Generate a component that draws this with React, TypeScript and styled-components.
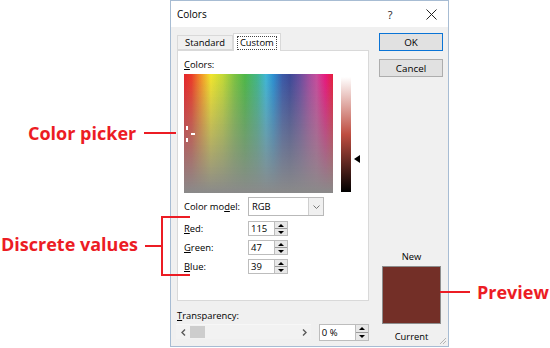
import React from "react";
import styled, { createGlobalStyle } from "styled-components";

const Global = createGlobalStyle`
  html, body { margin: 0; padding: 0; background: #ffffff; }
  body {
    width: 550px; height: 348px; overflow: hidden;
    font-family: "Open Sans", "Noto Sans", sans-serif;
    color: #000;
  }
  * { box-sizing: border-box; }
`;

const RED = "#ec1c24";

const Stage = styled.div`
  position: relative;
  width: 550px;
  height: 348px;
  display: flex;
  padding-left: 170px;
`;

const Dialog = styled.div`
  position: relative;
  width: 279px;
  height: 347px;
  border: 1px solid #a7bcd3;
  background: #f0f0f0;
  display: flex;
  flex-direction: column;
  font-size: 9.4px;
`;

const TitleBar = styled.div`
  height: 26px;
  background: #ffffff;
  display: flex;
  align-items: center;
  padding-left: 6px;
`;

const Title = styled.div`
  flex: 1;
  font-size: 10px;
`;

const TitleButton = styled.div<{ $w: number }>`
  width: ${(p) => p.$w}px;
  height: 26px;
  display: flex;
  align-items: center;
  justify-content: center;
  font-size: 11px;
  color: #222;
`;

const Body = styled.div`
  flex: 1;
  display: flex;
  gap: 10px;
  padding: 6px 4px 0 6px;
`;

const LeftCol = styled.div`
  width: 192px;
  display: flex;
  flex-direction: column;
`;

const TabStrip = styled.div`
  height: 17px;
  display: flex;
  align-items: flex-end;
`;

const Tab = styled.div<{ $active?: boolean }>`
  position: relative;
  z-index: ${(p) => (p.$active ? 1 : 0)};
  height: ${(p) => (p.$active ? 18 : 15)}px;
  margin-bottom: ${(p) => (p.$active ? -1 : 0)}px;
  padding: ${(p) => (p.$active ? "2px 3px 0" : "0 7px")};
  border: 1px solid #d9d9d9;
  border-bottom: ${(p) => (p.$active ? "none" : "1px solid #d9d9d9")};
  background: ${(p) => (p.$active ? "#ffffff" : "#f0f0f0")};
  display: flex;
  align-items: ${(p) => (p.$active ? "flex-start" : "center")};
  line-height: 12px;
`;

const FocusRect = styled.span`
  border: 1px dotted #444;
  padding: 0 2px;
  line-height: 12px;
`;

const Panel = styled.div`
  height: 251px;
  border: 1px solid #d9d9d9;
  background: #ffffff;
  padding: 0 6px;
  display: flex;
  flex-direction: column;
`;

const FieldLabel = styled.div<{ $mt?: number }>`
  margin-top: ${(p) => p.$mt ?? 0}px;
  line-height: 14px;
  height: 14px;
`;

const U = styled.span`
  text-decoration: underline;
  text-underline-offset: 1px;
`;

const PickerRow = styled.div`
  margin-top: 2px;
  display: flex;
  align-items: flex-start;
`;

const Spectrum = styled.div`
  position: relative;
  width: 150px;
  height: 119px;
  background:
    linear-gradient(to bottom, rgba(138,138,138,0) 0%, rgba(138,138,138,0.5) 50%, rgba(138,138,138,1) 100%),
    linear-gradient(to right,
      #e5242a 0%, #ec3a28 5%, #f07228 9%, #f39a26 12%, #f2e52c 18%, #c3d936 26%,
      #7cc242 34%, #4db748 41%, #41b58a 49%, #3fb6d6 55%, #2c8fd0 60%,
      #3a5aa8 66%, #3b4997 71%, #6a4d9e 78%, #a14d9e 84%, #c74c9c 89%,
      #e8177c 95%, #e61e3c 100%);
`;

const Cross = styled.div<{ $x: number; $y: number; $w: number; $h: number }>`
  position: absolute;
  left: ${(p) => p.$x}px;
  top: ${(p) => p.$y}px;
  width: ${(p) => p.$w}px;
  height: ${(p) => p.$h}px;
  background: #ffffff;
`;

const LumBar = styled.div`
  margin-top: 3px;
  margin-left: 8px;
  width: 10px;
  height: 115px;
  background: linear-gradient(to bottom,
    #ffffff 0%, hsl(6,49%,75%) 25%, hsl(6,49%,50%) 50%, hsl(6,49%,25%) 75%, #000000 100%);
`;

const ArrowCol = styled.div`
  margin-left: 3px;
  padding-top: 79px;
  width: 8px;
`;

const Row = styled.div<{ $mt: number }>`
  margin-top: ${(p) => p.$mt}px;
  display: flex;
  align-items: center;
`;

const RowLabel = styled.div`
  width: 64px;
  line-height: 13px;
`;

const Select = styled.div`
  width: 76px;
  height: 19px;
  border: 1px solid #b9b9b9;
  background: #ffffff;
  display: flex;
`;

const SelectValue = styled.div`
  flex: 1;
  padding-left: 3px;
  line-height: 17px;
`;

const SelectButton = styled.div`
  width: 15px;
  border-left: 1px solid #cfcfcf;
  background: #f0f0f0;
  display: flex;
  align-items: center;
  justify-content: center;
`;

const SpinBox = styled.div<{ $w: number; $h: number }>`
  width: ${(p) => p.$w}px;
  height: ${(p) => p.$h}px;
  display: flex;
`;

const SpinValue = styled.div`
  flex: 1;
  border: 1px solid #bdbdbd;
  border-right: none;
  background: #ffffff;
  padding-left: 2px;
  display: flex;
  align-items: center;
  font-size: 9.5px;
`;

const SpinButtons = styled.div`
  width: 14px;
  border: 1px solid #bdbdbd;
  background: #e8e8e8;
  display: flex;
  flex-direction: column;
`;

const SpinHalf = styled.div<{ $top?: boolean }>`
  flex: 1;
  display: flex;
  align-items: center;
  justify-content: center;
  border-bottom: ${(p) => (p.$top ? "1px solid #9a9a9a" : "none")};
`;

const Tri = styled.div<{ $up?: boolean }>`
  width: 0;
  height: 0;
  border-left: 3px solid transparent;
  border-right: 3px solid transparent;
  ${(p) => (p.$up ? "border-bottom: 3px solid #000;" : "border-top: 3px solid #000;")}
`;

const ScrollRow = styled.div`
  margin-top: 1px;
  margin-left: -1px;
  display: flex;
  align-items: flex-start;
  gap: 8px;
`;

const Scrollbar = styled.div`
  width: 137px;
  height: 15px;
  background: #f2f2f2;
  border-top: 1px solid #f7f7f7;
  display: flex;
  align-items: center;
  padding: 0 4px 0 5px;
`;

const Thumb = styled.div`
  width: 15px;
  height: 12px;
  background: #cdcdcd;
  margin-left: 4px;
`;

const Grow = styled.div`
  flex: 1;
`;

const RightCol = styled.div`
  width: 64px;
  display: flex;
  flex-direction: column;
  padding-bottom: 3px;
`;

const Button = styled.div<{ $primary?: boolean; $mt?: number }>`
  height: 18px;
  margin-top: ${(p) => p.$mt ?? 0}px;
  border: 1px solid ${(p) => (p.$primary ? "#0a74d6" : "#adadad")};
  background: #e1e1e1;
  display: flex;
  align-items: center;
  justify-content: center;
  font-size: 9.8px;
`;

const CenterLabel = styled.div`
  margin-top: auto;
  text-align: center;
  line-height: 13px;
  padding-left: 1px;
`;

const Swatch = styled.div<{ $color: string }>`
  margin: 3px 0 6px 3px;
  width: 59px;
  height: 58px;
  border: 1px solid #8d8d8d;
  background: ${(p) => p.$color};
`;

const BottomLabel = styled.div`
  text-align: center;
  line-height: 13px;
  padding-left: 1px;
`;

const Grip = styled.svg`
  position: absolute;
  right: 1px;
  bottom: 1px;
`;

/* Callouts */
const Callout = styled.div<{ $x: number; $y: number }>`
  position: absolute;
  left: ${(p) => p.$x}px;
  top: ${(p) => p.$y}px;
  display: flex;
  align-items: center;
  font-family: "Open Sans", "Noto Sans", sans-serif;
  font-weight: 700;
  font-size: 18px;
  line-height: 24px;
  color: ${RED};
  white-space: nowrap;
`;

const CalloutText = styled.span<{ $ml?: number; $shift?: number }>`
  margin-left: ${(p) => p.$ml ?? 0}px;
  position: relative;
  top: ${(p) => p.$shift ?? 0}px;
`;

const Line = styled.div<{ $w: number; $ml: number }>`
  width: ${(p) => p.$w}px;
  height: 2px;
  margin-left: ${(p) => p.$ml}px;
  background: ${RED};
`;

const Bracket = styled.div`
  width: 29px;
  height: 60px;
  border: 2px solid ${RED};
  border-right: none;
`;

const Chevron = ({ dir }: { dir: "l" | "r" }) => (
  <svg width="5" height="7" viewBox="0 0 5 7">
    <path
      d={dir === "l" ? "M4 0.5 L1 3.5 L4 6.5" : "M1 0.5 L4 3.5 L1 6.5"}
      fill="none"
      stroke="#5a5a5a"
      strokeWidth="1.4"
    />
  </svg>
);

const Spin = ({ value, w, h }: { value: string; w: number; h: number }) => (
  <SpinBox $w={w} $h={h}>
    <SpinValue>{value}</SpinValue>
    <SpinButtons>
      <SpinHalf $top>
        <Tri $up />
      </SpinHalf>
      <SpinHalf>
        <Tri />
      </SpinHalf>
    </SpinButtons>
  </SpinBox>
);

export default function App() {
  return (
    <>
      <Global />
      <Stage>
        <Dialog>
          <TitleBar>
            <Title>Colors</Title>
            <TitleButton $w={48}>?</TitleButton>
            <TitleButton $w={34}>
              <svg width="11" height="11" viewBox="0 0 11 11">
                <path d="M0.5 0.5 L10.5 10.5 M10.5 0.5 L0.5 10.5" stroke="#222" strokeWidth="1" />
              </svg>
            </TitleButton>
          </TitleBar>
          <Body>
            <LeftCol>
              <TabStrip>
                <Tab>Standard</Tab>
                <Tab $active>
                  <FocusRect>Custom</FocusRect>
                </Tab>
              </TabStrip>
              <Panel>
                <FieldLabel $mt={7}>
                  <U>C</U>olors:
                </FieldLabel>
                <PickerRow>
                  <Spectrum>
                    <Cross $x={2} $y={52} $w={2} $h={4} />
                    <Cross $x={2} $y={64} $w={2} $h={4} />
                    <Cross $x={7} $y={59} $w={4} $h={2} />
                  </Spectrum>
                  <LumBar />
                  <ArrowCol>
                    <svg width="6" height="8" viewBox="0 0 6 8">
                      <path d="M0 4 L6 0 L6 8 Z" fill="#000" />
                    </svg>
                  </ArrowCol>
                </PickerRow>
                <Row $mt={4}>
                  <RowLabel>
                    Color mo<U>d</U>el:
                  </RowLabel>
                  <Select>
                    <SelectValue>RGB</SelectValue>
                    <SelectButton>
                      <svg width="7" height="4" viewBox="0 0 7 4">
                        <path d="M0.5 0.5 L3.5 3.5 L6.5 0.5" fill="none" stroke="#777" strokeWidth="1" />
                      </svg>
                    </SelectButton>
                  </Select>
                </Row>
                <Row $mt={5}>
                  <RowLabel>
                    <U>R</U>ed:
                  </RowLabel>
                  <Spin value="115" w={40} h={15} />
                </Row>
                <Row $mt={4}>
                  <RowLabel>
                    <U>G</U>reen:
                  </RowLabel>
                  <Spin value="47" w={40} h={15} />
                </Row>
                <Row $mt={4}>
                  <RowLabel>
                    <U>B</U>lue:
                  </RowLabel>
                  <Spin value="39" w={40} h={15} />
                </Row>
              </Panel>
              <FieldLabel $mt={8}>
                <U>T</U>ransparency:
              </FieldLabel>
              <ScrollRow>
                <Scrollbar>
                  <Chevron dir="l" />
                  <Thumb />
                  <Grow />
                  <Chevron dir="r" />
                </Scrollbar>
                <Spin value="0 %" w={51} h={17} />
              </ScrollRow>
            </LeftCol>
            <RightCol>
              <Button $primary>OK</Button>
              <Button $mt={8}>Cancel</Button>
              <CenterLabel>New</CenterLabel>
              <Swatch $color="rgb(115,47,39)" />
              <BottomLabel>Current</BottomLabel>
            </RightCol>
          </Body>
          <Grip width="8" height="8" viewBox="0 0 8 8">
            <path d="M7 1 L1 7 M7 4 L4 7" stroke="#b5b5b5" strokeWidth="1" />
          </Grip>
        </Dialog>

        <Callout $x={28} $y={121}>
          <CalloutText>Color picker</CalloutText>
          <Line $w={32} $ml={8} />
        </Callout>
        <Callout $x={1} $y={216}>
          <CalloutText $shift={-2}>Discrete values</CalloutText>
          <Line $w={16} $ml={7} />
          <Bracket />
        </Callout>
        <Callout $x={440} $y={280}>
          <Line $w={30} $ml={0} />
          <CalloutText $ml={7}>Preview</CalloutText>
        </Callout>
      </Stage>
    </>
  );
}
